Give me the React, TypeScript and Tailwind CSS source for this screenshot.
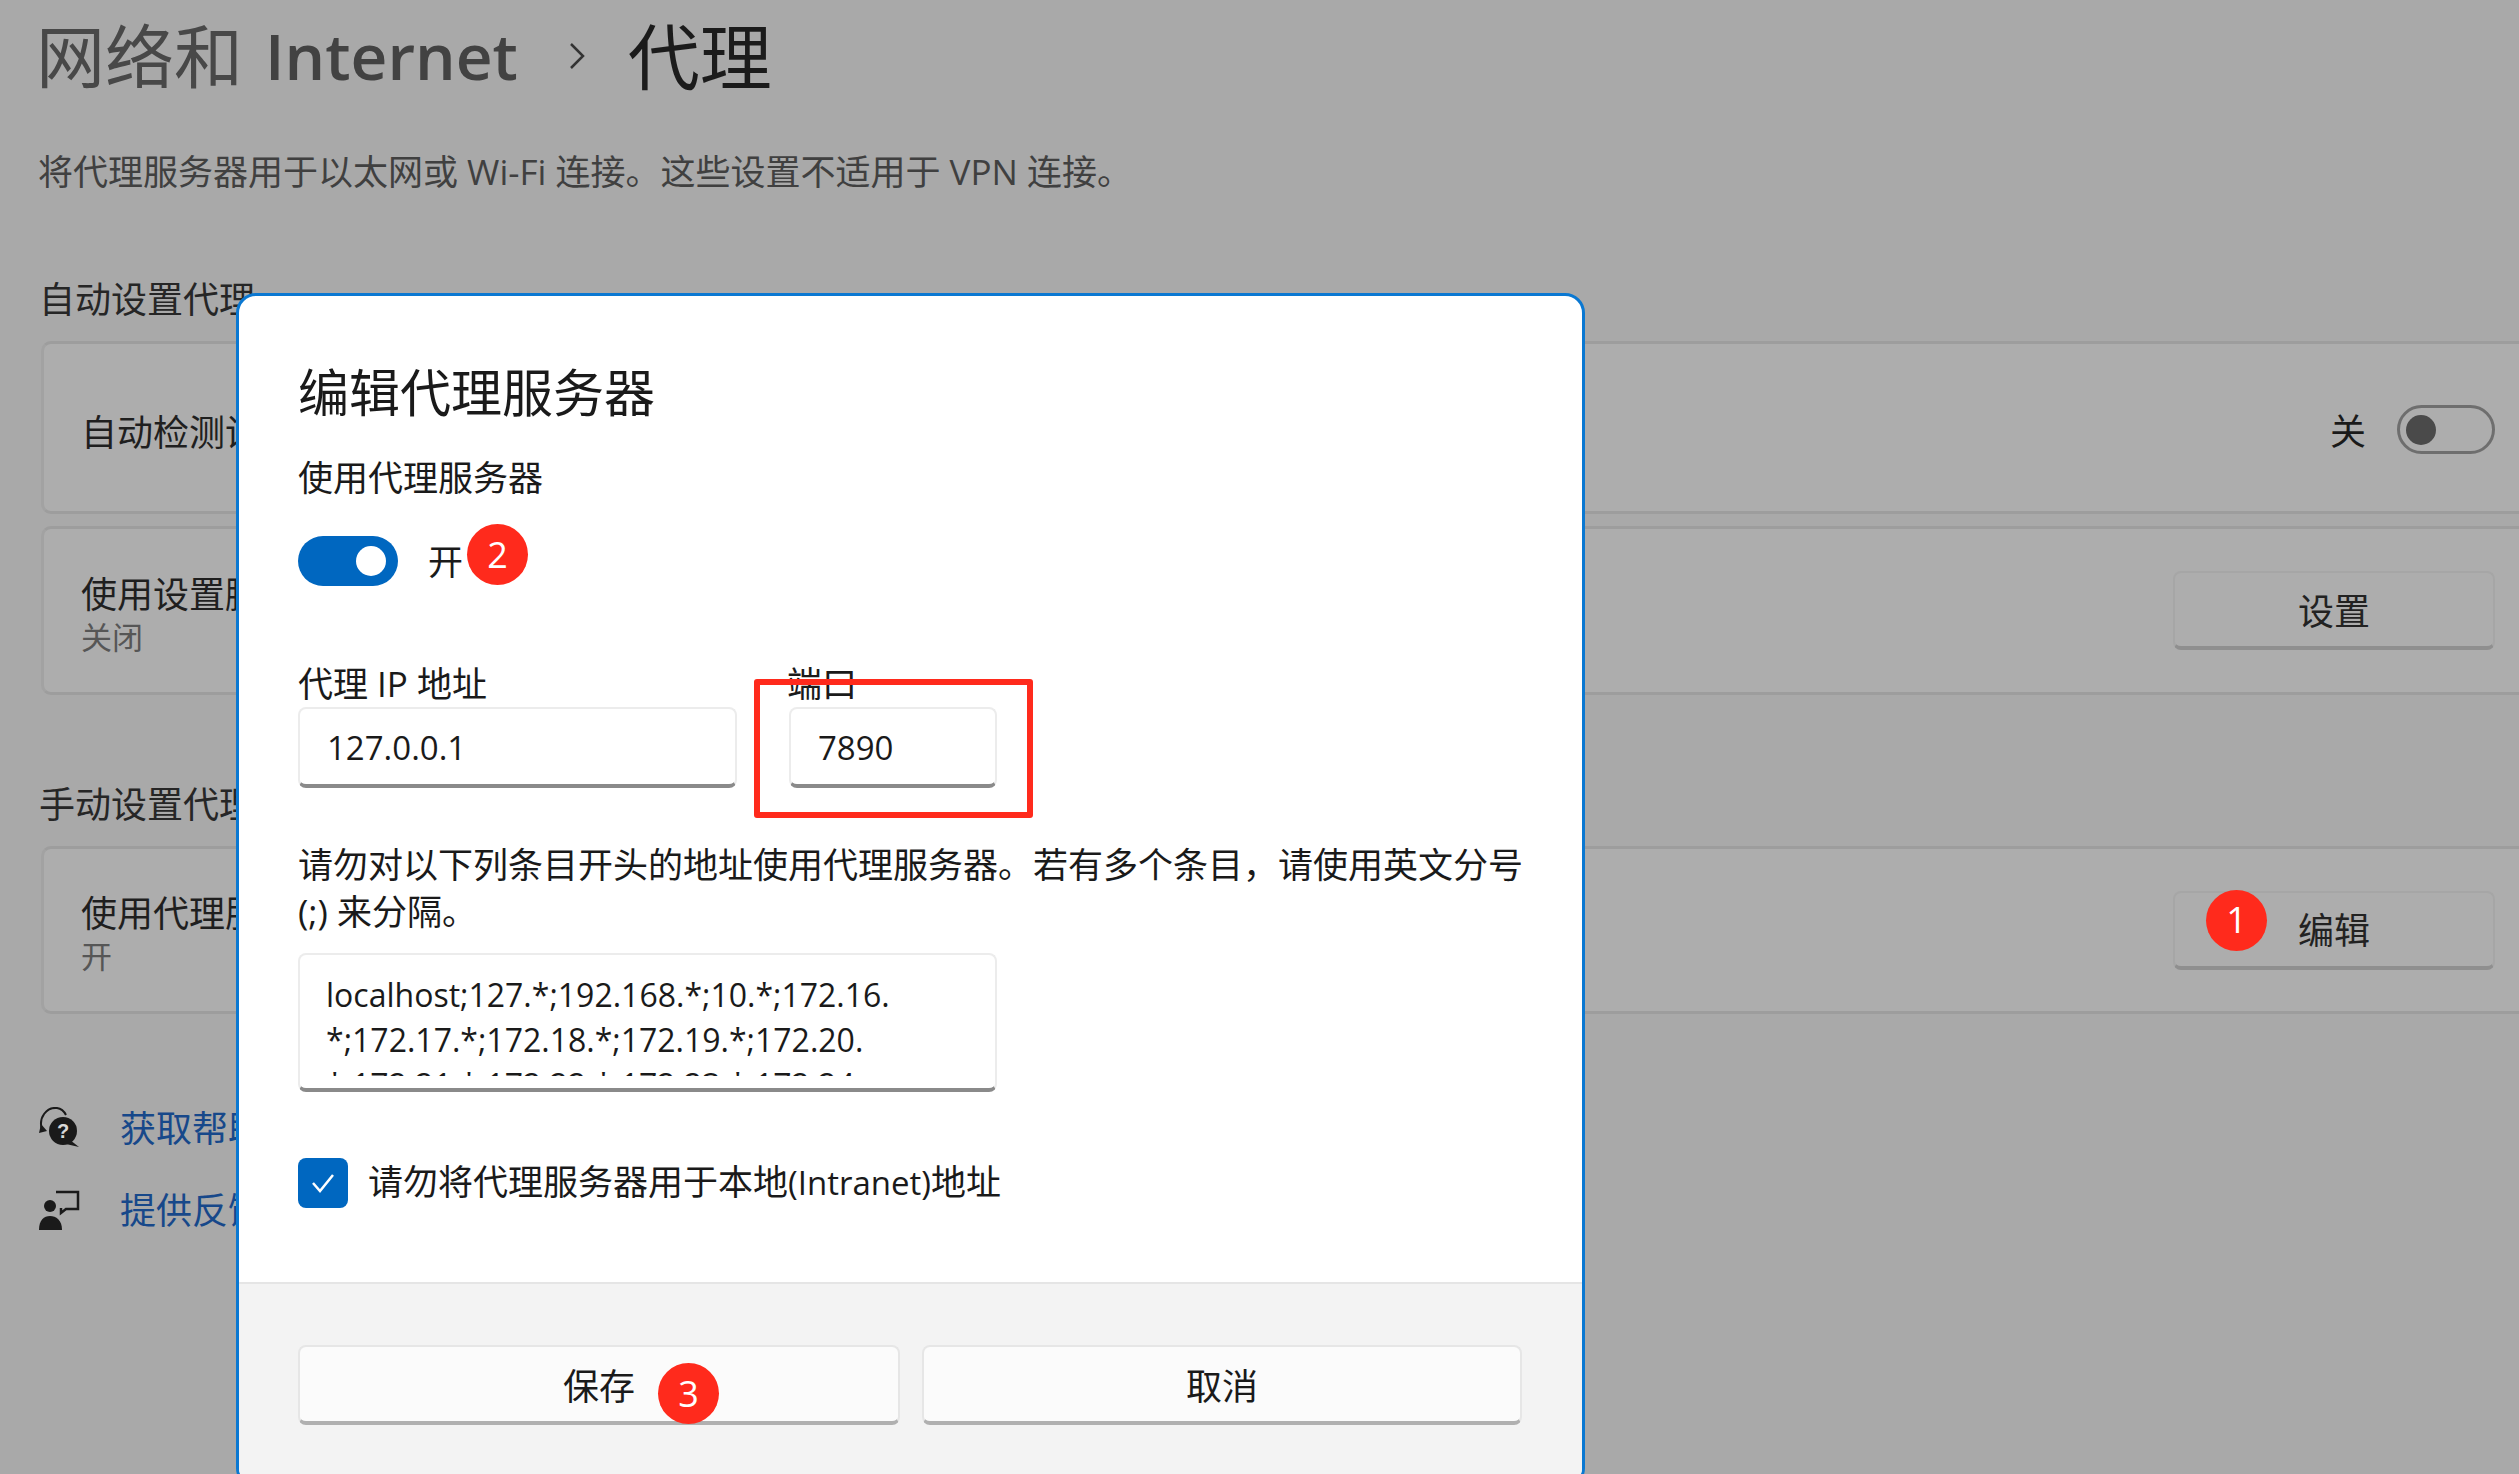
import React from 'react';

const font = '[font-family:"Open_Sans","Noto_Sans_CJK_SC",sans-serif]';

const Badge = ({ n, className }: { n: number; className: string }) => (
  <div className={`absolute flex h-[61px] w-[61px] items-center justify-center rounded-full bg-[#ff2a1c] text-[36px] leading-none text-white ${className}`}>
    {n}
  </div>
);

const BgCard = ({ title, sub, height, children }: { title: string; sub?: string; height: string; children?: React.ReactNode }) => (
  <div className={`flex items-center justify-between rounded-l-[10px] border-y-[3px] border-l-[3px] border-y-[#9d9d9d] border-l-[#a2a2a2] bg-[#adadad] pl-[37px] pr-[24px] ${height}`}>
    <div className="flex flex-col pt-[10px]">
      <span className="text-[36px] leading-[42px] text-[#1f1f1f]">{title}</span>
      {sub ? <span className="text-[31px] leading-[42px] text-[#565656]">{sub}</span> : null}
    </div>
    {children}
  </div>
);

const BgButton = ({ label, badge }: { label: string; badge?: boolean }) => (
  <div className="relative flex h-[79px] w-[322px] items-center justify-center rounded-[8px] border-2 border-b-4 border-[#a6a6a6] border-b-[#8f8f8f] bg-[#adadad] pt-[4px] text-[36px] text-[#222]">
    {label}
    {badge ? <Badge n={1} className="left-[31px] -top-[3px]" /> : null}
  </div>
);

const Field = ({ value, width }: { value: string; width: string }) => (
  <div className={`flex h-[81px] items-center rounded-[8px] border-2 border-b-4 border-[#ececec] border-b-[#8a8a8a] bg-white pl-[27px] pt-[3px] text-[33px] text-[#1a1a1a] ${width}`}>
    {value}
  </div>
);

const DlgButton = ({ label, width, children }: { label: string; width: string; children?: React.ReactNode }) => (
  <div className={`relative flex h-[80px] items-center justify-center rounded-[8px] border-2 border-b-4 border-[#e6e6e6] border-b-[#b0b0b0] bg-[#fbfbfb] pt-[5px] text-[36px] text-[#1a1a1a] ${width}`}>
    {label}
    {children}
  </div>
);

const HelpIcon = () => (
  <svg width="44" height="44" viewBox="0 0 44 44" className="shrink-0">
    <path d="M4 23 C0 10 9 0 19 1 C23 1.500 26 4 28 8" fill="none" stroke="#1a1a1a" strokeWidth="2" />
    <path d="M1 26 L9 24 L3 17 Z" fill="#1a1a1a" />
    <circle cx="25" cy="24" r="14" fill="#1a1a1a" />
    <path d="M32 33 L41 40 L28 37 Z" fill="#1a1a1a" />
    <text x="25" y="31" textAnchor="middle" fontSize="20" fontWeight="700" fill="#d8d8d8" fontFamily="Liberation Sans">?</text>
  </svg>
);

const FeedbackIcon = () => (
  <svg width="44" height="44" viewBox="0 0 44 44" className="shrink-0">
    <circle cx="12" cy="17" r="6" fill="#1a1a1a" />
    <path d="M1 41 C1 31 6 27 12 27 C18 27 24 31 24 41 Z" fill="#1a1a1a" />
    <path d="M18 3 H40 V20 H28 L23 24 V19" fill="none" stroke="#1a1a1a" strokeWidth="2.500" />
  </svg>
);

export default function App() {
  return (
    <div className={`relative h-[1474px] w-full overflow-hidden bg-[#a9a9a9] ${font}`}>
      <div className="pl-[41px]">
        <div className="-ml-[5px] flex h-[112px] items-center">
          <span className="text-[69px] leading-none text-[#484848]">网络和</span>
          <span className="ml-[22px] text-[64px] font-semibold leading-none text-[#424242]">Internet</span>
          <svg width="20" height="30" viewBox="0 0 20 30" className="ml-[49px] mr-[41px]">
            <path d="M4 3 L16 15 L4 27" fill="none" stroke="#333" strokeWidth="2.500" />
          </svg>
          <span className="text-[72px] leading-none text-[#1b1b1b]">代理</span>
        </div>
        <div className="-ml-[3px] mt-[36px] text-[35px] leading-[48px] text-[#404040]">
          将代理服务器用于以太网或 Wi-Fi 连接。这些设置不适用于 VPN 连接。
        </div>
        <div className="-ml-[2px] mb-[17px] mt-[80px] text-[36px] leading-[48px] text-[#262626]">自动设置代理</div>
        <div className="flex flex-col gap-[12px]">
          <BgCard title="自动检测设置" height="h-[173px]">
            <div className="mt-[4px] flex items-center gap-[31px]">
              <span className="mt-[4px] text-[36px] text-[#1a1a1a]">关</span>
              <div className="flex h-[49px] w-[98px] items-center rounded-full border-[3px] border-[#6e6e6e] pl-[6px]">
                <div className="h-[30px] w-[30px] rounded-full bg-[#4a4a4a]" />
              </div>
            </div>
          </BgCard>
          <BgCard title="使用设置脚本" sub="关闭" height="h-[169px]">
            <BgButton label="设置" />
          </BgCard>
        </div>
        <div className="-ml-[2px] mb-[17px] mt-[86px] text-[36px] leading-[48px] text-[#262626]">手动设置代理</div>
        <BgCard title="使用代理服务器" sub="开" height="h-[168px]">
          <BgButton label="编辑" badge />
        </BgCard>
        <div className="-ml-[3px] mt-[85px] flex h-[60px] items-center gap-[38px] text-[36px] text-[#17488a]">
          <HelpIcon />
          <span>获取帮助</span>
        </div>
        <div className="-ml-[3px] mt-[22px] flex h-[60px] items-center gap-[38px] text-[36px] text-[#17488a]">
          <FeedbackIcon />
          <span>提供反馈</span>
        </div>
      </div>

      {/* dialog */}
      <div className="absolute left-[236px] top-[293px] flex h-[1195px] w-[1349px] flex-col overflow-hidden rounded-[20px] border-[3px] border-[#0a78d2] bg-white">
        <div className="flex h-[986px] flex-col pl-[59px]">
          <div className="mt-[63px] text-[51px] leading-[66px] text-[#1a1a1a]">编辑代理服务器</div>
          <div className="mt-[30px] text-[35px] leading-[46px] text-[#1a1a1a]">使用代理服务器</div>
          <div className="relative mt-[33px] flex items-center gap-[30px]">
            <div className="flex h-[50px] w-[100px] items-center justify-end rounded-full bg-[#0067c0] pr-[12px]">
              <div className="h-[30px] w-[30px] rounded-full bg-white" />
            </div>
            <span className="mt-[3px] text-[35px] leading-[50px] text-[#1a1a1a]">开</span>
            <Badge n={2} className="left-[169px] -top-[10px]" />
          </div>
          <div className="relative mt-[74px] flex gap-[52px]">
            <div className="flex flex-col">
              <span className="text-[35px] leading-[46px] text-[#1a1a1a]">代理 IP 地址</span>
              <Field value="127.0.0.1" width="w-[439px]" />
            </div>
            <div className="flex flex-col">
              <span className="-ml-[2px] text-[35px] leading-[46px] text-[#1a1a1a]">端口</span>
              <Field value="7890" width="w-[208px]" />
            </div>
            <div className="absolute left-[456px] top-[18px] h-[139px] w-[279px] rounded-[3px] border-[6px] border-[#ff2a1c]" />
          </div>
          <div className="mt-[53px] w-[1240px] text-[35px] leading-[47px] text-[#1a1a1a]">
            请勿对以下列条目开头的地址使用代理服务器。若有多个条目，请使用英文分号
            <br />
            (;) 来分隔。
          </div>
          <div className="mt-[18px] h-[139px] w-[699px] rounded-[8px] border-2 border-b-4 border-[#ececec] border-b-[#8a8a8a] bg-white pl-[26px] pr-[10px] pt-[17px]">
            <div className="h-[104px] overflow-hidden break-all text-[32px] leading-[45px] text-[#1a1a1a]">
              localhost;127.*;192.168.*;10.*;172.16.
              <br />
              *;172.17.*;172.18.*;172.19.*;172.20.
              <br />
              *;172.21.*;172.22.*;172.23.*;172.24.
            </div>
          </div>
          <div className="mt-[65px] flex items-center gap-[20px]">
            <div className="flex h-[50px] w-[50px] items-center justify-center rounded-[8px] bg-[#0067c0]">
              <svg width="28" height="24" viewBox="0 0 28 24">
                <path d="M4 12 L11 20 L24 4" fill="none" stroke="#fff" strokeWidth="2.500" />
              </svg>
            </div>
            <span className="text-[35px] leading-[50px] text-[#1a1a1a]">
              请勿将代理服务器用于本地<span className="text-[33px]">(Intranet)</span>地址
            </span>
          </div>
        </div>
        <div className="flex flex-1 gap-[22px] border-t-2 border-[#e5e5e5] bg-[#f3f3f3] pl-[59px] pt-[61px]">
          <DlgButton label="保存" width="w-[602px]">
            <Badge n={3} className="left-[358px] top-[16px]" />
          </DlgButton>
          <DlgButton label="取消" width="w-[600px]" />
        </div>
      </div>
    </div>
  );
}
